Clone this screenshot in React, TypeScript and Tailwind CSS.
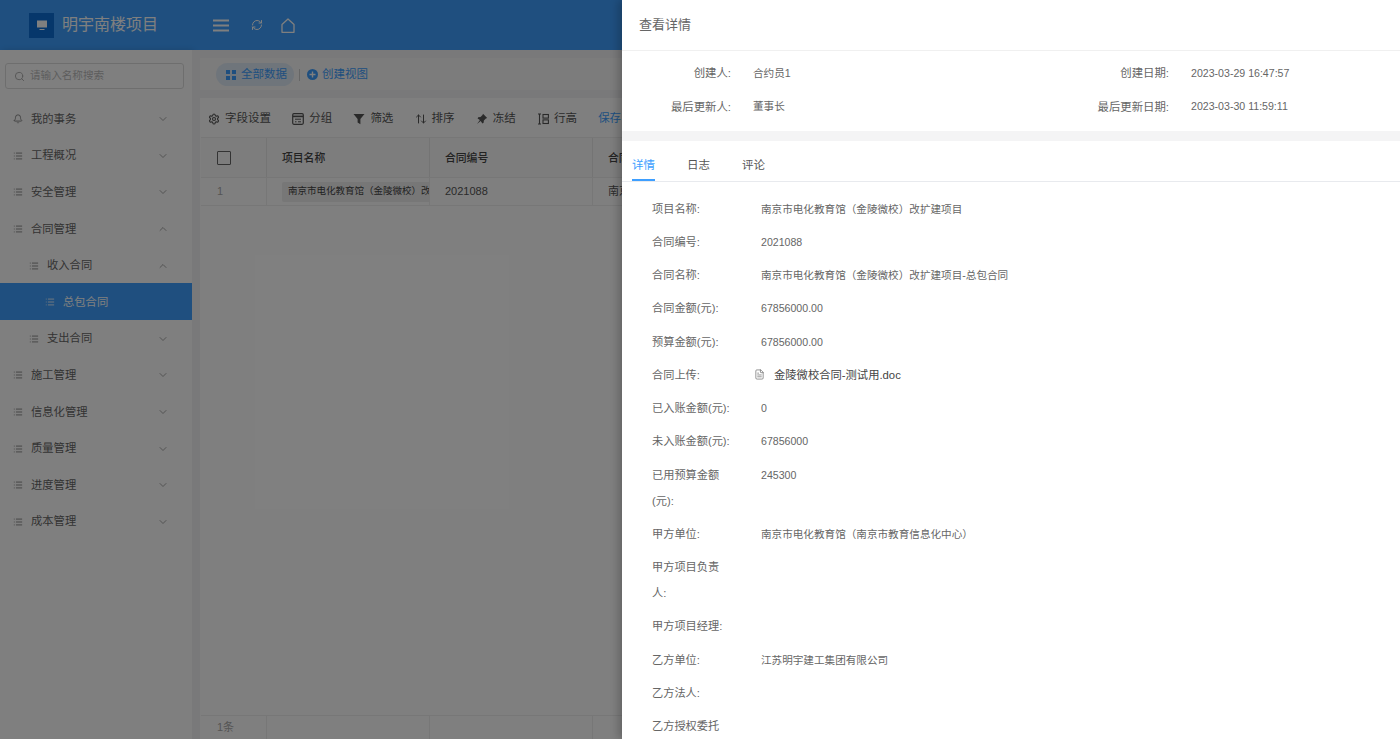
import { Bell, ChevronDown, ChevronUp, List, RefreshCw, Search, Settings, ArrowUpDown, FileText } from "lucide-react"

const font = { fontFamily: '"Liberation Sans", "Noto Sans CJK SC", sans-serif' }

const menus = [
  { label: "我的事务", level: 0, icon: "bell" },
  { label: "工程概况", level: 0 },
  { label: "安全管理", level: 0 },
  { label: "合同管理", level: 0, open: true },
  { label: "收入合同", level: 1, open: true },
  { label: "总包合同", level: 2, active: true, leaf: true },
  { label: "支出合同", level: 1 },
  { label: "施工管理", level: 0 },
  { label: "信息化管理", level: 0 },
  { label: "质量管理", level: 0 },
  { label: "进度管理", level: 0 },
  { label: "成本管理", level: 0 },
]

const tools = [
  { label: "字段设置", icon: <Settings className="h-3 w-3" strokeWidth={2.2} /> },
  {
    label: "分组",
    icon: (
      <svg viewBox="0 0 12 12" className="h-3 w-3" fill="none" stroke="currentColor">
        <rect x="0.7" y="0.7" width="10.6" height="10.6" rx="1.2" strokeWidth="1.2" />
        <path d="M1 3.4h10" strokeWidth="1.6" />
        <path d="M3 6.2h6M3 8.8h1.5M6 8.8h3" strokeWidth="1" />
      </svg>
    ),
  },
  {
    label: "筛选",
    icon: (
      <svg viewBox="0 0 12 12" className="h-3 w-3" fill="currentColor">
        <path d="M0.5 1h11L7.4 6v5.2L4.6 9.6V6z" />
      </svg>
    ),
  },
  { label: "排序", icon: <ArrowUpDown className="h-3 w-3" /> },
  {
    label: "冻结",
    icon: (
      <svg viewBox="0 0 12 12" className="h-3 w-3" fill="currentColor">
        <path d="M7 0.8l4.2 4.2-1.3.5-2 2-.3 2.3-1.2.6-1.7-2.3L1 11l2.9-3.9-2.3-1.7.6-1.2 2.3-.3 2-2z" />
      </svg>
    ),
  },
  {
    label: "行高",
    icon: (
      <svg viewBox="0 0 12 12" className="h-3 w-3" fill="none" stroke="currentColor" strokeWidth="1.1">
        <path d="M1 1h3M1 11h3M2.5 1v10" />
        <rect x="6" y="1.5" width="5.4" height="3.6" />
        <rect x="6" y="6.9" width="5.4" height="3.6" />
      </svg>
    ),
  },
]

const details: [string, React.ReactNode][] = [
  ["项目名称:", "南京市电化教育馆（金陵微校）改扩建项目"],
  ["合同编号:", "2021088"],
  ["合同名称:", "南京市电化教育馆（金陵微校）改扩建项目-总包合同"],
  ["合同金额(元):", "67856000.00"],
  ["预算金额(元):", "67856000.00"],
  [
    "合同上传:",
    <span className="-ml-[7px] flex items-center gap-[9px] text-[11.3px] text-[#444]">
      <FileText className="h-[11px] w-[11px] text-[#666]" strokeWidth={1.5} />
      <span>金陵微校合同-测试用.doc</span>
    </span>,
  ],
  ["已入账金额(元):", "0"],
  ["未入账金额(元):", "67856000"],
  ["已用预算金额(元):", "245300"],
  ["甲方单位:", "南京市电化教育馆（南京市教育信息化中心）"],
  ["甲方项目负责人:", ""],
  ["甲方项目经理:", ""],
  ["乙方单位:", "江苏明宇建工集团有限公司"],
  ["乙方法人:", ""],
  ["乙方授权委托人:", ""],
]

function SideMenu() {
  return (
    <aside className="flex w-[192px] shrink-0 flex-col bg-white text-[11.3px] text-[#666] shadow-[2px_0_6px_rgba(0,0,0,0.15)]">
      <div className="pl-[5px] pr-[8px] pt-[13px]">
        <div className="flex h-[26px] items-center gap-[5px] rounded-[3px] border border-[#ddd] px-2 text-[10.6px] text-[#bbb]">
          <Search className="h-[11px] w-[11px] text-[#aaa]" />
          <span>请输入名称搜索</span>
        </div>
      </div>
      <nav className="mt-[11px]">
        {menus.map((m) => (
          <div
            key={m.label}
            className={`flex h-[36.6px] items-center pr-[23px] pt-[2px] ${m.active ? "bg-[#3e9fff] text-white" : ""} ${
              m.level === 0 ? "pl-[13px]" : m.level === 1 ? "pl-[29px]" : "pl-[45px]"
            }`}
          >
            {m.icon === "bell" ? (
              <Bell className="h-[10px] w-[10px] text-[#777]" />
            ) : (
              <List className={`h-[10px] w-[10px] ${m.active ? "text-white" : "text-[#777]"}`} />
            )}
            <span className="ml-[8px] flex-1">{m.label}</span>
            {!m.leaf &&
              (m.open ? (
                <ChevronUp className="h-[12px] w-[12px] text-[#888]" strokeWidth={1.5} />
              ) : (
                <ChevronDown className="h-[12px] w-[12px] text-[#888]" strokeWidth={1.5} />
              ))}
          </div>
        ))}
      </nav>
    </aside>
  )
}

function TableArea() {
  return (
    <main className="flex min-w-0 flex-1 flex-col overflow-hidden bg-[#f2f3f5] pl-[8px] pt-[8px] text-[11.5px] text-[#555]">
      <div className="flex h-[32px] items-center bg-[#f8f8f8] pl-[16px] pt-[1px]">
        <div className="flex h-[23px] w-[78px] items-center gap-[5px] rounded-full bg-[#dfeaf6] pl-[10px] text-[#3e9fff]">
          <svg viewBox="0 0 10 10" className="h-[10px] w-[10px]" fill="currentColor">
            <rect x="0" y="0" width="4" height="4" />
            <rect x="6" y="0" width="4" height="4" />
            <rect x="0" y="6" width="4" height="4" />
            <rect x="6" y="6" width="4" height="4" />
          </svg>
          全部数据
        </div>
        <div className="ml-[5px] mr-[7px] h-[12px] w-px bg-[#ccc]" />
        <div className="flex items-center gap-[4px] text-[#3e9fff]">
          <svg viewBox="0 0 11 11" className="h-[11px] w-[11px]">
            <circle cx="5.5" cy="5.5" r="5.5" fill="currentColor" />
            <path d="M5.5 2.5v6M2.5 5.5h6" stroke="#fff" strokeWidth="1.4" />
          </svg>
          创建视图
        </div>
      </div>
      <div className="mt-[8px] flex min-h-0 flex-1 flex-col bg-white pl-px">
        <div className="flex h-[39px] items-center gap-[21.2px] whitespace-nowrap pl-[7px] pt-[2px]">
          {tools.map((t) => (
            <div key={t.label} className="flex items-center gap-[5px] text-[#555]">
              {t.icon}
              {t.label}
            </div>
          ))}
          <span className="text-[#3e9fff]">保存</span>
        </div>
        <div className="flex h-[41px] border-y border-[#eee] bg-[#fafafa] text-[10.8px] font-medium text-[#444]">
          <div className="flex w-[66px] items-center border-r border-[#e8e8e8] pl-[16px]">
            <div className="h-[14px] w-[14px] rounded-[1px] border-[1.5px] border-[#666]" />
          </div>
          <div className="flex w-[163px] items-center border-r border-[#e8e8e8] pl-[15px] pt-[2px]">项目名称</div>
          <div className="flex w-[163px] items-center border-r border-[#e8e8e8] pl-[15px] pt-[2px]">合同编号</div>
          <div className="flex flex-1 items-center pl-[15px] pt-[2px]">合同名称</div>
        </div>
        <div className="flex h-[28px] border-b border-[#eee] text-[11px]">
          <div className="flex w-[66px] items-center border-r border-[#eee] pl-[16px] text-[#aaa]">1</div>
          <div className="flex w-[163px] items-center overflow-hidden border-r border-[#eee] pl-[15px]">
            <span className="flex h-[20px] items-center whitespace-nowrap rounded-l-[2px] bg-[#eee] pl-[6px] text-[9.5px] text-[#444]">
              南京市电化教育馆（金陵微校）改扩建项目
            </span>
          </div>
          <div className="flex w-[163px] items-center border-r border-[#eee] pl-[15px]">2021088</div>
          <div className="flex flex-1 items-center whitespace-nowrap pl-[15px]">南京市电化教育馆</div>
        </div>
        <div className="flex-1" />
        <div className="flex h-[24px] border-t border-[#eee] text-[11px] text-[#aaa]">
          <div className="flex w-[66px] items-center border-r border-[#eee] pl-[16px]">1条</div>
          <div className="w-[163px] border-r border-[#eee]" />
          <div className="w-[163px] border-r border-[#eee]" />
        </div>
      </div>
    </main>
  )
}

function Drawer() {
  return (
    <section className="absolute inset-y-0 right-0 flex w-[778px] flex-col overflow-hidden bg-white text-[10.6px] text-[#666] shadow-[-4px_0_8px_rgba(0,0,0,0.2)]">
      <header className="flex h-[51px] shrink-0 items-center border-b border-[#f0f0f0] pl-[17px] text-[13px] text-[#666]">查看详情</header>
      <div className="grid h-[80px] shrink-0 grid-cols-[109px_251px_187px_1fr] content-start pt-[6px] whitespace-nowrap">
        <div className="flex h-[33.5px] items-center justify-end text-[11.4px]">创建人:</div>
        <div className="flex h-[33.5px] items-center pl-[22px]">合约员1</div>
        <div className="flex h-[33.5px] items-center justify-end text-[11.4px]">创建日期:</div>
        <div className="flex h-[33.5px] items-center pl-[22px]">2023-03-29 16:47:57</div>
        <div className="flex h-[33.5px] items-center justify-end text-[11.4px]">最后更新人:</div>
        <div className="flex h-[33.5px] items-center pl-[22px]">董事长</div>
        <div className="flex h-[33.5px] items-center justify-end text-[11.4px]">最后更新日期:</div>
        <div className="flex h-[33.5px] items-center pl-[22px]">2023-03-30 11:59:11</div>
      </div>
      <div className="h-[10px] shrink-0 bg-[#f4f4f5]" />
      <div className="flex h-[41px] shrink-0 items-end gap-[32px] border-b border-[#e8eaee] pl-[10px] text-[11.5px] text-[#555]">
        <div className="flex h-[24px] items-start border-b-2 border-[#3e9fff] text-[#3e9fff]">详情</div>
        <div className="flex h-[24px] items-start">日志</div>
        <div className="flex h-[24px] items-start">评论</div>
      </div>
      <div className="pl-[30px] pt-[13.6px]">
        {details.map(([label, value]) => (
          <div key={label} className="flex pb-[7.25px] leading-[26px]">
            <div className="w-[81px] shrink-0 text-[11.2px] text-[#666]">{label}</div>
            <div className="ml-[28px] text-[#666]">{value}</div>
          </div>
        ))}
      </div>
    </section>
  )
}

export default function App() {
  return (
    <div className="relative flex h-[739px] w-[1400px] flex-col overflow-hidden bg-white" style={font}>
      <header className="flex h-[50px] shrink-0 items-center bg-[#3e9fff] text-white">
        <div className="flex w-[192px] shrink-0 items-center pl-[29px]">
          <div className="flex h-[25px] w-[25px] items-center justify-center bg-[#0d6fd6]">
            <svg viewBox="0 0 12 12" className="h-[12px] w-[12px]" fill="#fff">
              <rect x="1" y="1.5" width="10" height="7" />
              <rect x="3.5" y="10" width="5" height="1" />
            </svg>
          </div>
          <span className="ml-[8px] text-base">明宇南楼项目</span>
        </div>
        <svg viewBox="0 0 16 13" className="ml-[21px] h-[13px] w-[16px]" fill="none" stroke="currentColor" strokeWidth="1.8">
          <path d="M0 1.5h16M0 6.5h16M0 11.5h16" />
        </svg>
        <RefreshCw className="ml-[22px] h-[12px] w-[12px]" strokeWidth={2} />
        <svg viewBox="0 0 14 15" className="ml-[18px] h-[15px] w-[14px]" fill="none" stroke="currentColor" strokeWidth="1.3">
          <path d="M7 1L1 6.5v7.8h12V6.5z" strokeLinejoin="round" />
        </svg>
      </header>
      <div className="flex min-h-0 flex-1">
        <SideMenu />
        <TableArea />
      </div>
      <div className="absolute inset-0 bg-black/50" />
      <Drawer />
    </div>
  )
}
